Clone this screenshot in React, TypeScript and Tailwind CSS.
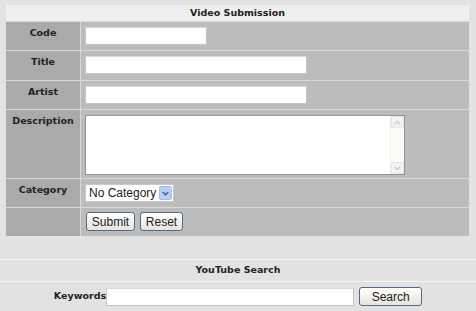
import React from "react";

const labelCls = "bg-[#aaaaaa] flex justify-center pt-[4px] font-bold text-[9.5px] text-[#222]";
const valueCls = "bg-[#bcbcbc] pl-[4px] pt-[5px]";
const inputCls = "block h-[18px] bg-white border border-[#c4c4c4] border-t-[#d8d8d8] outline-none px-1 text-[12px]";

function Row({ label, h, children }: { label: string; h: string; children?: React.ReactNode }) {
    return (
        <>
            <div className={`${labelCls} ${h}`}>{label}</div>
            <div className={`${valueCls} ${h}`}>{children}</div>
        </>
    );
}

function XpButton({ label, w }: { label: string; w: string }) {
    return (
        <button
            type="button"
            className={`${w} h-[19px] rounded-[3px] border border-[#4d6a8c] bg-gradient-to-b from-white to-[#e6e4dc] text-[12px] leading-none text-[#222] font-['Liberation_Sans',Arial,sans-serif]`}
        >
            {label}
        </button>
    );
}

export default function App() {
    return (
        <div className="w-[476px] h-[311px] bg-[#e2e2e2] overflow-hidden font-['DejaVu_Sans',Verdana,sans-serif]">
            <div className="pt-[5px] pl-[6px] pr-[7px]">
                <div className="grid grid-cols-[74px_1fr] gap-px bg-[#d9d9d9]">
                    <div className="col-span-2 h-[16px] bg-[#efefef] flex items-center justify-center font-bold text-[9.5px] text-[#222]">
                        Video Submission
                    </div>
                    <Row label="Code" h="h-[28px]">
                        <input className={`${inputCls} w-[122px]`} />
                    </Row>
                    <Row label="Title" h="h-[29px]">
                        <input className={`${inputCls} w-[222px]`} />
                    </Row>
                    <Row label="Artist" h="h-[28px]">
                        <input className={`${inputCls} w-[222px]`} />
                    </Row>
                    <Row label="Description" h="h-[68px]">
                        <div className="flex w-[320px] h-[60px] bg-white border border-[#8a96a3]">
                            <textarea className="flex-1 resize-none outline-none" />
                            <div className="w-[14px] flex flex-col justify-between bg-[#fbfbf7] border-l border-[#eeeeee]">
                                <div className="h-[12px] flex items-center justify-center border border-[#e6e6e6] bg-[#f2f2ee]">
                                    <svg width="7" height="5" viewBox="0 0 7 5"><path d="M1 4 L3.5 1.5 L6 4" stroke="#c8c8c8" strokeWidth="1.2" fill="none" /></svg>
                                </div>
                                <div className="h-[12px] flex items-center justify-center border border-[#e6e6e6] bg-[#f2f2ee]">
                                    <svg width="7" height="5" viewBox="0 0 7 5"><path d="M1 1 L3.5 3.5 L6 1" stroke="#c8c8c8" strokeWidth="1.2" fill="none" /></svg>
                                </div>
                            </div>
                        </div>
                    </Row>
                    <Row label="Category" h="h-[28px]">
                        <div className="flex items-center w-[89px] h-[18px] bg-white border border-[#c8c8c8] font-['Liberation_Sans',Arial,sans-serif] text-[12px] text-[#222]">
                            <span className="flex-1 pl-[3px]">No Category</span>
                            <div className="w-[13px] h-[14px] mr-[1px] rounded-[2px] bg-[#b9cdf5] border border-[#a7bde8] flex items-center justify-center">
                                <svg width="7" height="5" viewBox="0 0 7 5"><path d="M0.8 1 L3.5 3.8 L6.2 1" stroke="#4d61a8" strokeWidth="1.6" fill="none" /></svg>
                            </div>
                        </div>
                    </Row>
                    <div className="bg-[#aaaaaa] h-[28px]" />
                    <div className="bg-[#bcbcbc] h-[28px] pl-[5px] pt-[4px] flex gap-[5px]">
                        <XpButton label="Submit" w="w-[49px]" />
                        <XpButton label="Reset" w="w-[43px]" />
                    </div>
                </div>
            </div>
            <div className="h-[23px]" />
            <div className="border-t border-b border-[#f2f2f2] h-[23px] flex items-center justify-center font-bold text-[9.5px] text-[#222]">
                YouTube Search
            </div>
            <div className="flex items-center justify-center pt-[5px]">
                <span className="font-bold text-[9.5px] text-[#222]">Keywords</span>
                <input className="block w-[248px] h-[18px] bg-white border border-[#c4c4c4] border-t-[#d8d8d8] outline-none" />
                <div className="ml-[5px] flex">
                    <XpButton label="Search" w="w-[63px]" />
                </div>
            </div>
        </div>
    );
}
